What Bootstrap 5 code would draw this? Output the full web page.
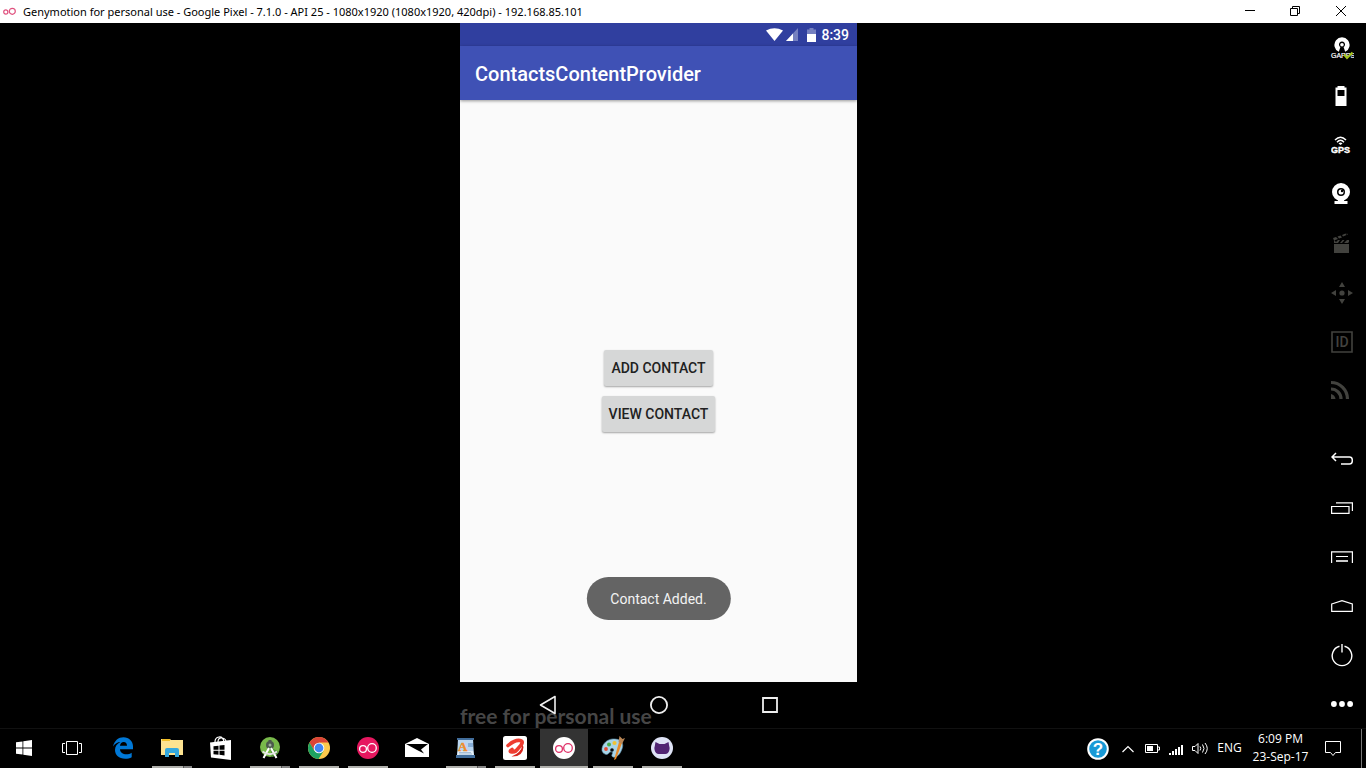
<!DOCTYPE html>
<html lang="en">
<head>
<meta charset="utf-8">
<meta name="viewport" content="width=device-width, initial-scale=1">
<title>Genymotion for personal use</title>
<link href="https://cdn.jsdelivr.net/npm/bootstrap@5.3.0/dist/css/bootstrap.min.css" rel="stylesheet">
<style>
  body { font-family: "Open Sans", "Noto Sans", sans-serif; font-size: 12px; line-height: 16px; background: #000; }
  button { padding: 0; border: 0; background: none; color: inherit; }
  svg { display: block; flex: none; }
  .titlebar { height: 23px; background: #fff; color: #000; padding-left: 3px; padding-right: 1px; }
  .titlebar-name { font-family: "Noto Sans", sans-serif; font-size: 11px; line-height: 16px; font-weight: 400; margin: 0 0 0 7px; padding-top: 1px; }
  .win-btn { width: 46px; height: 23px; padding-bottom: 2px; }
  .device { width: 397px; font-family: Roboto, sans-serif; }
  .device-status { height: 23px; background: #303f9f; color: #fff; font-size: 14px; font-weight: 500; padding-right: 8px; }
  .device-wifi { margin-right: 3px; }
  .device-signal { margin-right: 9px; }
  .device-battery { margin-right: 5px; }
  .device-appbar { height: 54px; background: #3f51b5; color: #fff; padding: 2px 0 0 15px; box-shadow: 0 1px 3px rgba(0,0,0,.4); z-index: 1; }
  .device-appbar h1 { font-size: 20px; line-height: 24px; font-weight: 500; margin: 0; }
  .device-content { background: #fafafa; gap: 10px; }
  .app-btn { height: 36px; padding: 0 7px; background: #d6d7d7; color: #212121; font-size: 14px; font-weight: 500; border-radius: 2px; box-shadow: 0 1px 2px rgba(0,0,0,.35); }
  .app-toast { bottom: 62px; left: 50%; transform: translateX(-50%); height: 43px; padding: 0 24px; border-radius: 22px; background: #646464; color: #f3f3f3; font-size: 14px; white-space: nowrap; }
  .device-nav { height: 46px; gap: 63px; }
  .nav-key { width: 48px; height: 46px; }
  .watermark { left: 0; bottom: 0; color: #464646; font: 700 21px/24px Lato, sans-serif; }
  .toolbar { width: 49px; color: #fff; }
  .tool { width: 49px; height: 49px; }
  .sensor { padding: 0 2px 2px 0; }
  .tool:disabled { color: #42423e; }
  .taskbar { height: 40px; background: #000; color: #fff; border-top: 1px solid #111; }
  .task { width: 48px; height: 39px; padding-bottom: 2px; position: relative; }
  .apps { margin-left: 3px; gap: 1px; }
  .running::after { content: ""; position: absolute; left: 4px; right: 4px; bottom: 0; height: 2px; background: #b0b0ac; }
  .grouped::after { background: linear-gradient(90deg, #b0b0ac 31px, #555 31px, #555 32px, #858585 32px); }
  .current { background: #333; }
  .current::after { left: 0; right: 0; }
  .tray-btn { width: 24px; height: 39px; }
  .help { width: 24px; margin-right: 6px; }
  .language { width: 35px; font-size: 12px; padding-bottom: 2px; }
  .clock { width: 67px; line-height: 18px; padding-bottom: 2px; }
  .notes { width: 38px; padding-bottom: 2px; }
  .peek { width: 5px; height: 39px; margin-left: 9px; border-left: 1px solid #777; }
</style>
</head>
<body>
<div class="d-flex flex-column vh-100 overflow-hidden">
  <header class="titlebar d-flex align-items-center flex-shrink-0">
    <svg width="13" height="9" viewBox="0 0 13 9" fill="none" stroke="#e0527f" stroke-width="1.2"><circle cx="2.8" cy="5" r="2.1"/><circle cx="9.3" cy="4.3" r="3"/></svg>
    <h2 class="titlebar-name flex-grow-1">Genymotion for personal use - Google Pixel - 7.1.0 - API 25 - 1080x1920 (1080x1920, 420dpi) - 192.168.85.101</h2>
    <button class="win-btn d-flex align-items-center justify-content-center" aria-label="Minimize"><svg width="11" height="11" viewBox="0 0 11 11"><path d="M0 5.5h10" stroke="#000"/></svg></button>
    <button class="win-btn d-flex align-items-center justify-content-center" aria-label="Restore"><svg width="14" height="12" viewBox="0 0 14 12" fill="none" stroke="#000"><path d="M1.500 3.500h7v7h-7zM3.500 3.500v-2h7v7h-2"/></svg></button>
    <button class="win-btn d-flex align-items-center justify-content-center" aria-label="Close"><svg width="14" height="12" viewBox="0 0 14 12" stroke="#000"><path d="M1 1l10 10M11 1L1 11"/></svg></button>
  </header>

  <main class="d-flex flex-grow-1">
    <div class="flex-grow-1 d-flex justify-content-center">
      <section class="device d-flex flex-column position-relative">
        <div class="device-status d-flex align-items-center justify-content-end">
          <svg class="device-wifi" width="17" height="14" viewBox="0 0 17 14"><path d="M0 2.500Q8.500-2 17 2.500L8.500 13z" fill="#fff"/></svg>
          <svg class="device-signal" width="12" height="13" viewBox="0 0 12 13"><path d="M12 0v13H0z" fill="#7580c0"/><path d="M7 5.500V13H0z" fill="#fff"/></svg>
          <svg class="device-battery" width="9" height="14" viewBox="0 0 9 14"><path d="M0 1.500h2.500V0h4v1.500H9V6H0z" fill="#7580c0"/><path d="M0 6h9v8H0z" fill="#fff"/></svg>
          <span>8:39</span>
        </div>
        <div class="device-appbar d-flex align-items-center"><h1>ContactsContentProvider</h1></div>
        <div class="device-content flex-grow-1 d-flex flex-column align-items-center justify-content-center position-relative">
          <button class="app-btn">ADD CONTACT</button>
          <button class="app-btn">VIEW CONTACT</button>
          <div class="app-toast position-absolute d-flex align-items-center" role="status">Contact Added.</div>
        </div>
        <nav class="device-nav d-flex justify-content-center position-relative z-1" aria-label="Device keys">
          <button class="nav-key d-flex align-items-center justify-content-center" aria-label="Back"><svg width="18" height="20" viewBox="0 0 18 20"><path d="M16 1.500v17L1.500 10z" fill="none" stroke="#eee" stroke-width="1.6" stroke-linejoin="round"/></svg></button>
          <button class="nav-key d-flex align-items-center justify-content-center" aria-label="Home"><svg width="20" height="20" viewBox="0 0 20 20"><circle cx="10" cy="10" r="8.100" fill="none" stroke="#eee" stroke-width="1.8"/></svg></button>
          <button class="nav-key d-flex align-items-center justify-content-center" aria-label="Overview"><svg width="18" height="18" viewBox="0 0 18 18"><path d="M2 2h14v14H2z" fill="none" stroke="#eee" stroke-width="1.8"/></svg></button>
        </nav>
        <div class="watermark position-absolute z-0">free for personal use</div>
      </section>
    </div>

    <aside class="toolbar d-flex flex-column">
      <button class="tool d-flex align-items-center justify-content-center" aria-label="Open GApps"><svg width="24" height="24" viewBox="0 0 24 24"><path d="M8.800 15.800A7.600 7.600 0 1 1 15.200 15.800L13.600 11A3 3 0 1 0 10.400 11z" fill="#fff"/><circle cx="12" cy="8.800" r="1.800" fill="#fff"/><text x="1" y="22" font-family="Liberation Sans, sans-serif" font-size="7" fill="#fff" stroke="#fff" stroke-width=".2">GAPPS</text><path d="M14 18.500l3 3.500L22.500 16.500" fill="none" stroke="#a4c51c" stroke-width="2"/></svg></button>
      <button class="tool sensor d-flex align-items-center justify-content-center" aria-label="Battery"><svg width="14" height="20" viewBox="0 0 14 20"><path d="M1.500 1.500h2V0h7v1.500h2V20h-11zM3.500 4v6h7V4z" fill="#fff" fill-rule="evenodd"/></svg></button>
      <button class="tool sensor d-flex align-items-center justify-content-center" aria-label="GPS"><svg width="20" height="18" viewBox="0 0 20 18"><g fill="none" stroke="#fff" stroke-width="1.500"><path d="M4 4Q9.500-1.500 15 4M6 6.200Q9.500 2.500 13 6.200"/></g><path d="M7.500 7.500Q9.500 5.500 11.500 7.500L9.500 9z" fill="#fff"/><text x="0" y="17" font-family="Liberation Sans, sans-serif" font-size="9" font-weight="700" fill="#fff" stroke="#fff" stroke-width=".4">GPS</text></svg></button>
      <button class="tool sensor d-flex align-items-center justify-content-center" aria-label="Camera"><svg width="18" height="22" viewBox="0 0 18 22"><circle cx="9" cy="9" r="6.500" fill="none" stroke="#fff" stroke-width="5"/><circle cx="9" cy="9" r="2.500" fill="#fff"/><circle cx="10" cy="8" r="1.200" fill="#000"/><path d="M6 16h6v2h3.500v3h-13v-3H6z" fill="#fff"/></svg></button>
      <button class="tool sensor d-flex align-items-center justify-content-center" aria-label="Screencast" disabled><svg width="18" height="20" viewBox="0 0 18 20" fill="currentColor"><path d="M2 11h15v9H2zM2 10V7l2 2 2-2h2L6 10h2l2.500-3h2L10 10h2l3-3h2v2l-1 1zM1 5l3-1 2 2-4 1.500zM5.500 3.500l3-1L10 4.500 7 5.500zM10 2l3.500-1.500 1 1.500L11 3.500zM14.500.5L16 1l-1 1z"/></svg></button>
      <button class="tool d-flex align-items-center justify-content-center" aria-label="Move" disabled><svg width="22" height="22" viewBox="0 0 22 22" fill="currentColor"><circle cx="11" cy="11" r="2.600"/><path d="M11 0l3 5H8zM11 22l3-5H8zM0 11l5-3v6zM22 11l-5-3v6z"/></svg></button>
      <button class="tool d-flex align-items-center justify-content-center" aria-label="Identifiers" disabled><svg width="22" height="22" viewBox="0 0 22 22"><path d="M1 1h20v20H1z" fill="none" stroke="currentColor" stroke-width="1.6"/><text x="11" y="16" text-anchor="middle" font-family="Roboto, sans-serif" font-size="14" font-weight="500" fill="currentColor">ID</text></svg></button>
      <button class="tool sensor d-flex align-items-center justify-content-center" aria-label="Network" disabled><svg width="20" height="20" viewBox="0 0 20 20" fill="none" stroke="currentColor" stroke-width="3.200"><path d="M0 2.500A16.500 16.500 0 0 1 16.500 19M0 9A10 10 0 0 1 10 19"/><path d="M0 14q4 1 4.500 5H0z" fill="currentColor" stroke="none"/></svg></button>

      <button class="tool mt-auto d-flex align-items-center justify-content-center" aria-label="Back"><svg width="22" height="14" viewBox="0 0 22 14" fill="none" stroke="#fff" stroke-width="1.500"><path d="M5 1L1 5l4 4M1 5h17.500q2.800 0 2.800 3.500T18.500 12H10"/></svg></button>
      <button class="tool d-flex align-items-center justify-content-center" aria-label="Recent apps"><svg width="22" height="12" viewBox="0 0 22 12" fill="none" stroke="#fff" stroke-width="1.200"><path d="M.6 4.500h17.400v6.900H.6zM5 .8h16.400V9"/></svg></button>
      <button class="tool d-flex align-items-center justify-content-center" aria-label="Menu"><svg width="22" height="12" viewBox="0 0 22 12" fill="none" stroke="#fff" stroke-width="1.200"><path d="M.6 12V.8h20.800V12M5 5.500h12"/><path d="M5 10h12" stroke-width="1.600"/></svg></button>
      <button class="tool d-flex align-items-center justify-content-center" aria-label="Home"><svg width="22" height="12" viewBox="0 0 22 12" fill="none" stroke="#fff" stroke-width="1.200"><path d="M.7 4L11 .7 21.300 4v7.300H.7z"/></svg></button>
      <button class="tool d-flex align-items-center justify-content-center" aria-label="Power"><svg width="22" height="24" viewBox="0 0 22 24" fill="none" stroke="#fff" stroke-width="1.400"><path d="M8.500 3.300a9.800 9.800 0 1 0 5 0M11 1v8.500"/></svg></button>
      <button class="tool d-flex align-items-center justify-content-center" aria-label="More"><svg width="22" height="6" viewBox="0 0 22 6" fill="#fff"><circle cx="2.900" cy="3" r="2.900"/><circle cx="11" cy="3" r="2.900"/><circle cx="19.100" cy="3" r="2.900"/></svg></button>
    </aside>
  </main>

  <footer class="taskbar d-flex flex-shrink-0">
    <button class="task d-flex align-items-center justify-content-center" aria-label="Start"><svg width="16" height="16" viewBox="0 0 16 16" fill="#fff"><path d="M0 2.300L6.500 1.400V7.500H0zM7.300 1.300L16 0v7.500H7.300zM0 8.400h6.500v6.200L0 13.700zM7.300 8.400H16V16l-8.700-1.300z"/></svg></button>
    <button class="task d-flex align-items-center justify-content-center" aria-label="Task view"><svg width="20" height="14" viewBox="0 0 20 14" fill="none" stroke="#fff"><path d="M4.500.5h11v13h-11zM3 2.500H.5v9H3M17 2.500h2.500v9H17"/></svg></button>
    <div class="apps d-flex flex-grow-1">
      <button class="task d-flex align-items-center justify-content-center" aria-label="Edge"><svg width="20" height="22" viewBox="0 0 20 22"><path d="M0 9.500C1.500 3.500 5.500.3 10.500.3c5.500 0 9.500 4 9.500 9v3H7c.2 3.200 3 5 6.300 5 2 0 3.900-.6 5.400-1.600v4.500c-2 1.100-4 1.500-6.500 1.500C6 21.700 2 18 2 13c0-3.500 2-6.500 5.500-8C4.500 5 2 6.500 0 9.500zM7 8.800h7c0-2.300-1.200-3.800-3.300-3.800C8.700 5 7.200 6.500 7 8.800z" fill="#0078d7" fill-rule="evenodd"/></svg></button>
      <button class="task running grouped d-flex align-items-center justify-content-center" aria-label="File Explorer"><svg width="22" height="19" viewBox="0 0 22 19"><path d="M0 3V1h9l1 1h12v15H0z" fill="#fde391"/><path d="M1 1h8v2H1z" fill="#f3bf27"/><path d="M4 19v-7q0-2 2-2h10q2 0 2 2v7h-4v-4H8v4z" fill="#35a9df"/></svg></button>
      <button class="task d-flex align-items-center justify-content-center" aria-label="Store"><svg width="22" height="24" viewBox="0 0 22 24"><path d="M5 6Q5 1.500 9 1q4-.5 5 5M8 6q0-4.500 4-4t4 4" fill="none" stroke="#fff" stroke-width="1.200"/><path d="M0 6.500L21 4v20L1 21.500z" fill="#fff"/><path d="M3.500 10.300l5-.6v4h-5zM9.500 9.500l5-.6v4.800h-5zM3.500 14.700h5v4l-5-.5zM9.500 14.700h5v4.800l-5-.7z" fill="#000"/></svg></button>
      <button class="task running grouped d-flex align-items-center justify-content-center" aria-label="Android Studio"><svg width="22" height="24" viewBox="0 0 22 24"><circle cx="11" cy="11" r="10" fill="#78b94a"/><path d="M11 11l9 5a10 10 0 0 1-7 5z" fill="#51903a"/><circle cx="11" cy="9" r="4" fill="#4c5a4c"/><path d="M9.500 4h3v4h-3z" fill="#4c5a4c"/><circle cx="11" cy="9" r="1.500" fill="#9db09d"/><path d="M10 12L4.500 22M12 12l5.500 10" stroke="#fff" stroke-width="2"/><path d="M3.500 15.500Q11 21 18 15.500" fill="none" stroke="#e4e4e4" stroke-width="1.800"/></svg></button>
      <button class="task running d-flex align-items-center justify-content-center" aria-label="Chrome"><svg width="22" height="22" viewBox="0 0 22 22"><circle cx="11" cy="11" r="11" fill="#fdc94c"/><path d="M1.500 5.500A11 11 0 0 1 20.500 5.500H11L6.200 13.700z" fill="#db4437"/><path d="M1.500 5.500A11 11 0 0 0 10.500 22l5.200-8.300-9.400 0z" fill="#1da261"/><circle cx="11" cy="11" r="5.300" fill="#fff"/><circle cx="11" cy="11" r="4.400" fill="#4285f4"/></svg></button>
      <button class="task running d-flex align-items-center justify-content-center" aria-label="Genymotion"><svg width="22" height="22" viewBox="0 0 22 22" fill="none" stroke="#fff" stroke-width="1.300"><circle cx="11" cy="11" r="11" fill="#e6175f" stroke="none"/><circle cx="6" cy="12" r="3.400"/><circle cx="15" cy="11" r="4.300"/></svg></button>
      <button class="task d-flex align-items-center justify-content-center" aria-label="Mail"><svg width="24" height="20" viewBox="0 0 24 20"><path d="M0 6l12-6 12 6v13H0z" fill="#fff"/><path d="M1 6h22l-7 5.500 3 4-7-3.500z" fill="#000"/></svg></button>
      <button class="task running grouped d-flex align-items-center justify-content-center" aria-label="WordPad"><svg width="20" height="22" viewBox="0 0 20 22"><path d="M2 2h15l1 18H1z" fill="#b9d5ef"/><path d="M1 1h17v2H1zM0 18h19v3H0z" fill="#416d9b"/><path d="M2 14h15l1 4H1z" fill="#e3eef8"/><path d="M12 7h5M12 9h5" stroke="#5688c0"/><path d="M3 15.500h12M3 17h13" stroke="#8babc8" stroke-width=".7"/><text x="2" y="14" font-family="Liberation Serif, serif" font-size="13" font-weight="700" fill="#ef8d2d" stroke="#ef8d2d" stroke-width=".4">A</text></svg></button>
      <button class="task running d-flex align-items-center justify-content-center" aria-label="Airtel"><svg width="24" height="24" viewBox="0 0 24 24"><rect width="24" height="24" rx="2.500" fill="#fff"/><path d="M5 9.500Q12 3.500 17 4.500T15.500 12Q12.500 16.500 9 16t0-2.500" fill="none" stroke="#ee3d31" stroke-width="3.600" stroke-linecap="round"/><path d="M19.500 9Q18 17 8.500 20.500 20 21 20.500 11z" fill="#d8251d"/></svg></button>
      <button class="task running current d-flex align-items-center justify-content-center" aria-label="Genymotion player"><svg width="22" height="22" viewBox="0 0 22 22" fill="none" stroke="#df3269" stroke-width="1.300"><circle cx="11" cy="11" r="11" fill="#fff" stroke="none"/><circle cx="6" cy="12" r="3.400"/><circle cx="15" cy="11" r="4.300"/></svg></button>
      <button class="task running d-flex align-items-center justify-content-center" aria-label="Paint"><svg width="24" height="24" viewBox="0 0 24 24"><path d="M1 15C0 8 7 2 14 3c7 .5 9 5 7 10-2 6-6 9-9 8-3-1.500 1-4-1-5-3-1-3 3-6 2.500Q2 18 1 15z" fill="#a9d4e8" stroke="#5d91ad" stroke-width=".6"/><circle cx="5" cy="13" r="1.900" fill="#e54b35"/><circle cx="8" cy="8.500" r="2" fill="#46ad4c"/><circle cx="13.500" cy="7" r="2.100" fill="#f1c232"/><circle cx="11" cy="14" r="1.800" fill="#05080c"/><path d="M18 6l3 1-6 16-2 1z" fill="#e98b2a"/><path d="M17.500 6l1-6 3 3 2.500-1-3 6z" fill="#b98655"/></svg></button>
      <button class="task running d-flex align-items-center justify-content-center" aria-label="GitHub"><svg width="22" height="22" viewBox="0 0 22 22"><circle cx="11" cy="11" r="11" fill="#dfe3f6"/><path d="M4.500 5l4 2h5l4-2 .7 4q.8 2 .2 4-1 4-4 4H7.600q-3 0-4-4-.6-2 .2-4z" fill="#512473"/></svg></button>
    </div>

    <button class="tray-btn help d-flex align-items-center justify-content-center" aria-label="Help"><svg width="24" height="24" viewBox="0 0 24 24"><circle cx="12" cy="12" r="9.800" fill="#1799d6" stroke="#fff" stroke-width="2"/><text x="12" y="18" text-anchor="middle" font-family="Liberation Sans, sans-serif" font-size="17" font-weight="700" fill="#fff">?</text></svg></button>
    <button class="tray-btn d-flex align-items-center justify-content-center" aria-label="Hidden icons"><svg width="12" height="8" viewBox="0 0 12 8"><path d="M.5 7L6 1.500 11.500 7" fill="none" stroke="#fff" stroke-width="1.200"/></svg></button>
    <button class="tray-btn d-flex align-items-center justify-content-center" aria-label="Battery"><svg width="16" height="9" viewBox="0 0 16 9"><path d="M1.500.5h12v8h-12zM14 3h1.500v3H14" fill="none" stroke="#fff"/><path d="M3 2h6v5H3z" fill="#fff"/></svg></button>
    <button class="tray-btn d-flex align-items-center justify-content-center" aria-label="Network"><svg width="14" height="12" viewBox="0 0 14 12" fill="#fff"><path d="M0 10h2v2H0zM3 8h2v4H3zM6 6h2v6H6zM9 4h2v8H9zM12 2h2v10h-2z"/></svg></button>
    <button class="tray-btn d-flex align-items-center justify-content-center" aria-label="Volume"><svg width="17" height="13" viewBox="0 0 17 13" fill="none" stroke="#fff"><path d="M.5 4.500h2.500l3-3v10l-3-3H.5zM8 4.500q1.500 2 0 4M10.500 2.500q3 4 0 8M13 1q4.500 5.500 0 11"/></svg></button>
    <button class="language">ENG</button>
    <div class="clock align-self-center text-center"><div>6:09 PM</div><div>23-Sep-17</div></div>
    <button class="notes d-flex align-items-center justify-content-center" aria-label="Notifications"><svg width="16" height="16" viewBox="0 0 16 16"><path d="M.5 1.500h15v11h-5l-2.500 3-2.500-3h-5z" fill="none" stroke="#fff"/></svg></button>
    <button class="peek" aria-label="Show desktop"></button>
  </footer>
</div>
<script src="https://cdn.jsdelivr.net/npm/bootstrap@5.3.0/dist/js/bootstrap.bundle.min.js"></script>
</body>
</html>
